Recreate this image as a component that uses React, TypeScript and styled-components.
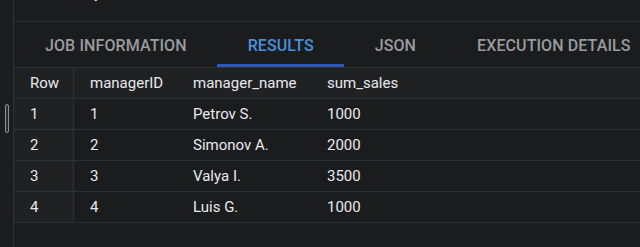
import styled, { createGlobalStyle } from "styled-components";

const GlobalStyle = createGlobalStyle`
  html, body {
    margin: 0;
    padding: 0;
    background: #1b1c1e;
    overflow: hidden;
  }
  body {
    font-family: Roboto, "Liberation Sans", sans-serif;
  }
`;

const Page = styled.div`
  display: flex;
  width: 640px;
  height: 247px;
  background: #1b1c1e;
  overflow: hidden;
`;

const Gutter = styled.div`
  width: 14px;
  flex: none;
  background: #1c1d1f;
  border-right: 1px solid #2e3033;
  box-sizing: border-box;
  display: flex;
  flex-direction: column;
  align-items: flex-start;
  padding: 104px 0 0 5px;
`;

const Thumb = styled.div`
  width: 4px;
  height: 29px;
  box-sizing: border-box;
  border: 1px solid #8d8f92;
  border-radius: 2px;
  background: #2a2c2e;
`;

const Main = styled.div`
  flex: 1;
  display: flex;
  flex-direction: column;
  min-width: 0;
`;

const QueryStrip = styled.div`
  height: 21px;
  border-bottom: 1px solid #2e3033;
  overflow: hidden;
  display: flex;
  align-items: flex-end;
  padding-left: 16px;
`;

const QueryText = styled.div`
  font-size: 14px;
  line-height: 14px;
  color: #e8eaed;
  transform: translateY(-21.5px);
  white-space: pre;
`;

const Tabs = styled.div`
  display: flex;
  height: 45px;
  border-bottom: 1px solid #2e3033;
`;

const Tab = styled.div<{ $active?: boolean }>`
  display: flex;
  align-items: center;
  padding: 1px 30px 0 31px;
  font-size: 16px;
  font-weight: 500;
  letter-spacing: 0.1px;
  color: ${(p) => (p.$active ? "#4a8fd9" : "#999b9f")};
  box-shadow: ${(p) => (p.$active ? "inset 0 -3px 0 #2e58b1" : "none")};
  white-space: nowrap;
`;

const Table = styled.div`
  display: grid;
  grid-template-columns: 60px 103px 134px 1fr;
  font-size: 15px;
  color: #e8eaed;
`;

const Cell = styled.div<{ $head?: boolean; $index?: boolean }>`
  height: 30px;
  display: flex;
  align-items: center;
  padding-left: 16px;
  border-bottom: 1px solid #2e3033;
  background: ${(p) => (p.$head || p.$index ? "#1f2123" : "#1b1c1e")};
  border-right: ${(p) => (p.$index ? "1px solid #2e3033" : "none")};
  white-space: nowrap;
`;

const rows = [
  { id: 1, name: "Petrov S.", sales: 1000 },
  { id: 2, name: "Simonov A.", sales: 2000 },
  { id: 3, name: "Valya I.", sales: 3500 },
  { id: 4, name: "Luis G.", sales: 1000 },
];

const tabs = ["JOB INFORMATION", "RESULTS", "JSON", "EXECUTION DETAILS"];

export default function App() {
  return (
    <>
      <GlobalStyle />
      <Page>
        <Gutter>
          <Thumb />
        </Gutter>
        <Main>
          <QueryStrip>
            <QueryText>{"sum, salary"}</QueryText>
          </QueryStrip>
          <Tabs>
            {tabs.map((t) => (
              <Tab key={t} $active={t === "RESULTS"}>
                {t}
              </Tab>
            ))}
          </Tabs>
          <Table>
            <Cell $head $index>Row</Cell>
            <Cell $head>managerID</Cell>
            <Cell $head>manager_name</Cell>
            <Cell $head>sum_sales</Cell>
            {rows.map((r, i) => (
              <>
                <Cell key={`i${i}`} $index>{i + 1}</Cell>
                <Cell key={`m${i}`}>{r.id}</Cell>
                <Cell key={`n${i}`}>{r.name}</Cell>
                <Cell key={`s${i}`}>{r.sales}</Cell>
              </>
            ))}
          </Table>
        </Main>
      </Page>
    </>
  );
}
